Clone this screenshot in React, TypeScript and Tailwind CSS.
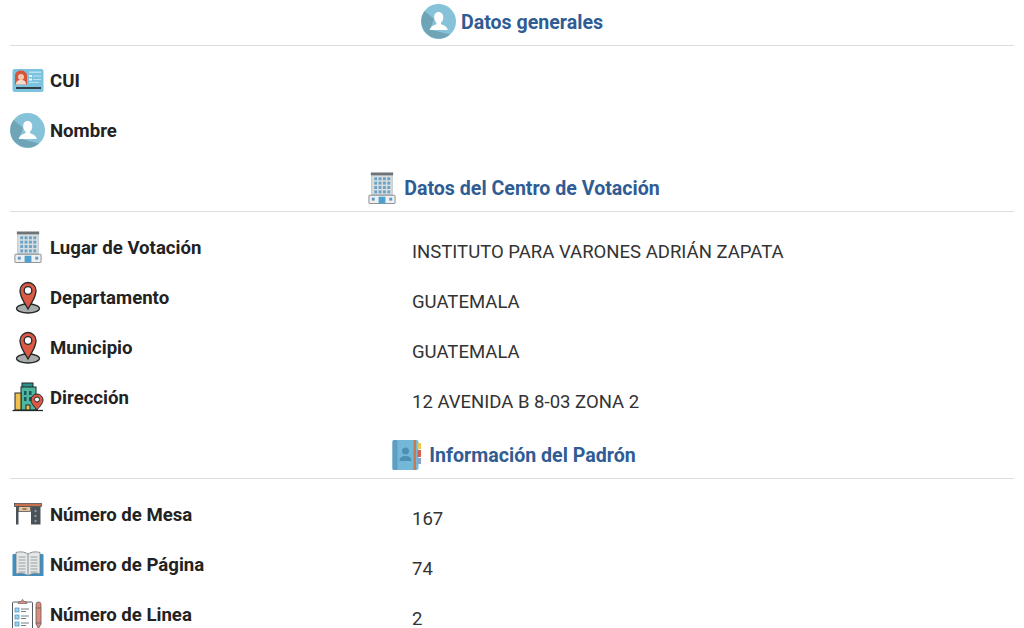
import type { ReactNode } from 'react';

function UserIcon({ size = 35 }: { size?: number }) {
  return (
    <svg width={size} height={size} viewBox="0 0 35 35" className="shrink-0">
      <circle cx="17.5" cy="17.5" r="17.5" fill="#86c2d8" />
      <path d="M3.500 7 L13 15 L9 25.500 L29 30.500 A17.5 17.5 0 0 1 3.500 7 Z" fill="#6fa3b6" />
      <path d="M17.5 8c3 0 4.800 2.300 4.800 5.300 0 2.400-1 4.400-2.300 5.400v1.500c2.600.8 6 2 6.800 5.800H8.700c.8-3.800 4.200-5 6.800-5.800v-1.500c-1.300-1-2.300-3-2.300-5.400 0-3 1.300-5.300 4.300-5.300z" fill="#fff" />
    </svg>
  );
}

function IdCardIcon() {
  return (
    <svg width="32" height="25" viewBox="0 0 32 24" className="shrink-0">
      <rect x="0.500" y="0.500" width="31" height="23" rx="2" fill="#7cc3e0" />
      <path d="M3 16V7a6 5 0 0 1 12 0v9z" fill="#d8523c" />
      <circle cx="9" cy="8.500" r="3" fill="#f6c9ae" />
      <path d="M4 16c0-3.500 2-4.500 5-4.500s5 1 5 4.500z" fill="#f3ddcf" />
      <rect x="17" y="3" width="12" height="1.500" fill="#b9e1f0" />
      <rect x="17" y="6.500" width="3" height="2" fill="#e8f5fa" />
      <rect x="21" y="7" width="8" height="1" fill="#b9e1f0" />
      <rect x="17" y="10" width="3" height="2" fill="#e8f5fa" />
      <rect x="21" y="10.500" width="8" height="1" fill="#b9e1f0" />
      <rect x="17" y="13.500" width="10" height="1" fill="#b9e1f0" />
      <rect x="4" y="18.500" width="25" height="2" fill="#33404a" />
    </svg>
  );
}

function BuildingIcon() {
  const windows = [];
  for (let r = 0; r < 4; r++) {
    for (let c = 0; c < 4; c++) {
      windows.push(<rect key={`${r}-${c}`} x={6 + c * 4.500} y={5.500 + r * 4.500} width="3" height="3" fill="#6aa3c8" />);
    }
  }
  return (
    <svg width="28" height="32" viewBox="0 0 28 33" className="shrink-0">
      <rect x="2.500" y="0.500" width="23" height="3" fill="#6d7478" />
      <rect x="3.500" y="3.500" width="21" height="20" fill="#d9dee0" stroke="#9aa2a6" strokeWidth="0.600" />
      {windows}
      <rect x="0.500" y="24" width="27" height="8.500" rx="0.500" fill="#eef0f1" stroke="#8a9094" />
      <rect x="10.500" y="25.500" width="7" height="7" fill="#4f9fd0" />
      <rect x="3.500" y="26.500" width="3" height="3" fill="#5d9ac4" />
      <rect x="21.500" y="26.500" width="3" height="3" fill="#5d9ac4" />
    </svg>
  );
}

function PinIcon() {
  return (
    <svg width="26" height="33" viewBox="0 0 26 33" className="shrink-0">
      <ellipse cx="13" cy="27.500" rx="11.500" ry="4.500" fill="#a9acab" stroke="#23282b" strokeWidth="1.300" />
      <path d="M13 28C9 20.500 5 16.500 5 9.500a8 8 0 0 1 16 0C21 16.500 17 20.500 13 28z" fill="#dc5a43" stroke="#23282b" strokeWidth="1.300" />
      <circle cx="13" cy="9.500" r="3.800" fill="#fff" stroke="#23282b" strokeWidth="1.300" />
    </svg>
  );
}

function CityPinIcon() {
  return (
    <svg width="32" height="30" viewBox="0 0 32 30" className="shrink-0">
      <rect x="10" y="1" width="11" height="5" fill="#2f8f8a" stroke="#23282b" />
      <rect x="9" y="5" width="15" height="23" fill="#4db8a0" stroke="#23282b" />
      <rect x="3" y="11" width="6" height="17" fill="#f0bf4c" stroke="#23282b" />
      <path d="M12 9h2.500v4H12zM17 9h2.500v4H17z" fill="#23565a" />
      <path d="M12 15h2.500v4H12zM17 15h2.500v4H17z" fill="#23565a" />
      <rect x="14" y="23" width="4" height="5" fill="#f0bf4c" stroke="#23282b" />
      <path d="M25 28c-3-4-6-6.500-6-10a6 6 0 0 1 12 0c0 3.500-3 6-6 10z" fill="#dc5a43" stroke="#23282b" />
      <circle cx="25" cy="17.500" r="2.500" fill="#fff" stroke="#23282b" />
      <path d="M0.500 28.500H31" stroke="#23282b" strokeWidth="1.300" />
    </svg>
  );
}

function BookAddressIcon() {
  return (
    <svg width="30" height="30" viewBox="0 0 29 30" className="shrink-0">
      <rect x="0" y="0" width="26" height="30" rx="2" fill="#74b8d8" />
      <rect x="0" y="0" width="5" height="30" rx="1.500" fill="#5f9ec2" />
      <rect x="21" y="0" width="2.500" height="30" fill="#c87a4e" />
      <circle cx="13" cy="11" r="3.500" fill="#4e8fb4" />
      <path d="M7 21c0-4 3-5 6-5s6 1 6 5z" fill="#4e8fb4" />
      <rect x="25" y="3" width="3.500" height="6" fill="#f0c74a" />
      <rect x="25" y="10" width="3.500" height="7" fill="#d8604a" />
      <rect x="25" y="18" width="3.500" height="6" fill="#8fa0c8" />
    </svg>
  );
}

function DeskIcon() {
  return (
    <svg width="28" height="22" viewBox="0 0 28 22" className="shrink-0">
      <rect x="0.500" y="0.500" width="27" height="3" fill="#c9714f" stroke="#3c4145" strokeWidth="0.700" />
      <rect x="2" y="3.500" width="2.500" height="18" fill="#4a5257" />
      <rect x="4.500" y="3.500" width="12" height="5" fill="#eac29a" stroke="#3c4145" strokeWidth="0.700" />
      <rect x="8.500" y="5.500" width="4" height="1" fill="#3c4145" />
      <rect x="17" y="3.500" width="9.500" height="18" fill="#4a5257" />
      <circle cx="21.500" cy="8" r="1.200" fill="#8c959a" />
      <circle cx="21.500" cy="13" r="1.200" fill="#8c959a" />
      <circle cx="21.500" cy="18" r="1.200" fill="#8c959a" />
    </svg>
  );
}

function OpenBookIcon() {
  const lines = [6, 9, 12, 15, 18, 21];
  return (
    <svg width="32" height="26" viewBox="0 0 32 26" className="shrink-0">
      <path d="M1.500 3h29a1 1 0 0 1 1 1v21H.5V4a1 1 0 0 1 1-1z" fill="#3f8fc0" />
      <path d="M4 1.500C8 .5 12 .5 16 3c4-2.500 8-2.500 12-1.500V23c-4-1-8-1-12 1.500C12 22 8 22 4 23z" fill="#e6e8e8" stroke="#6f7a80" strokeWidth="0.800" />
      <path d="M16 3v21" stroke="#6f7a80" strokeWidth="0.800" />
      {lines.map((y) => (
        <path key={y} d={`M6.500 ${y}h7M18.500 ${y}h7`} stroke="#8f989c" strokeWidth="0.900" />
      ))}
    </svg>
  );
}

function ClipboardIcon() {
  return (
    <svg width="32" height="30" viewBox="0 0 32 30" className="shrink-0">
      <rect x="0.500" y="3" width="20" height="27" rx="1" fill="#fff" stroke="#565d62" />
      <path d="M6 4.500c0-2 2-2 3-2s.5-2 1.500-2 .5 2 1.500 2 3 0 3 2z" fill="#e08a78" stroke="#565d62" strokeWidth="0.600" />
      <rect x="3" y="9" width="4" height="4" fill="#9fd0ea" stroke="#3f8fc0" strokeWidth="0.700" />
      <rect x="3" y="16" width="4" height="4" fill="#9fd0ea" stroke="#3f8fc0" strokeWidth="0.700" />
      <rect x="3" y="23" width="4" height="4" fill="#9fd0ea" stroke="#3f8fc0" strokeWidth="0.700" />
      <path d="M9 10h8M9 12.500h5M9 17h8M9 19.500h5M9 24h8M9 26.500h5" stroke="#565d62" strokeWidth="0.800" />
      <path d="M24 5.500a2.500 2.500 0 0 1 5 0V25l-2.500 4.500L24 25z" fill="#e08a78" stroke="#565d62" strokeWidth="0.800" />
      <path d="M24 9h5M24 24h5" stroke="#565d62" strokeWidth="0.800" />
    </svg>
  );
}

function SectionHeading({ icon, title, box }: { icon: ReactNode; title: string; box: string }) {
  return (
    <div className={`flex items-center justify-center border-b border-[#dedede] ${box}`}>
      {icon}
      <h2 className="pt-[2px] text-[19.600px] font-bold leading-none text-[#305c94]">{title}</h2>
    </div>
  );
}

function DataRow({ icon, label, value }: { icon: ReactNode; label: string; value?: string }) {
  return (
    <div className="flex h-[50px] items-center">
      <div className="flex w-[35px] shrink-0 justify-center">{icon}</div>
      <div className="w-[367px] pt-[2px] pl-[5px] text-[18.600px] font-bold leading-none text-[#222222]">{label}</div>
      {value && <div className="pt-[10px] text-[18.550px] leading-none text-[#333333]">{value}</div>}
    </div>
  );
}

export default function App() {
  return (
    <div className="h-[628px] overflow-hidden bg-white px-[10px] font-['Roboto',sans-serif]">
      <SectionHeading icon={<UserIcon />} title="Datos generales" box="h-[46px] gap-[5px] pt-[3px] pb-[5px]" />
      <div className="pt-[9px]">
        <DataRow icon={<IdCardIcon />} label="CUI" />
        <DataRow icon={<UserIcon />} label="Nombre" />
      </div>
      <SectionHeading icon={<BuildingIcon />} title="Datos del Centro de Votación" box="h-[57px] gap-[8px] pt-[11px] pb-[1px] pl-[4px]" />
      <div className="pt-[10px]">
        <DataRow icon={<BuildingIcon />} label="Lugar de Votación" value="INSTITUTO PARA VARONES ADRIÁN ZAPATA" />
        <DataRow icon={<PinIcon />} label="Departamento" value="GUATEMALA" />
        <DataRow icon={<PinIcon />} label="Municipio" value="GUATEMALA" />
        <DataRow icon={<CityPinIcon />} label="Dirección" value="12 AVENIDA B 8-03 ZONA 2" />
      </div>
      <SectionHeading icon={<BookAddressIcon />} title="Información del Padrón" box="h-[57px] gap-[7px] pt-[11px] pb-[1px] pl-[4px]" />
      <div className="pt-[10px]">
        <DataRow icon={<DeskIcon />} label="Número de Mesa" value="167" />
        <DataRow icon={<OpenBookIcon />} label="Número de Página" value="74" />
        <DataRow icon={<ClipboardIcon />} label="Número de Linea" value="2" />
      </div>
    </div>
  );
}
